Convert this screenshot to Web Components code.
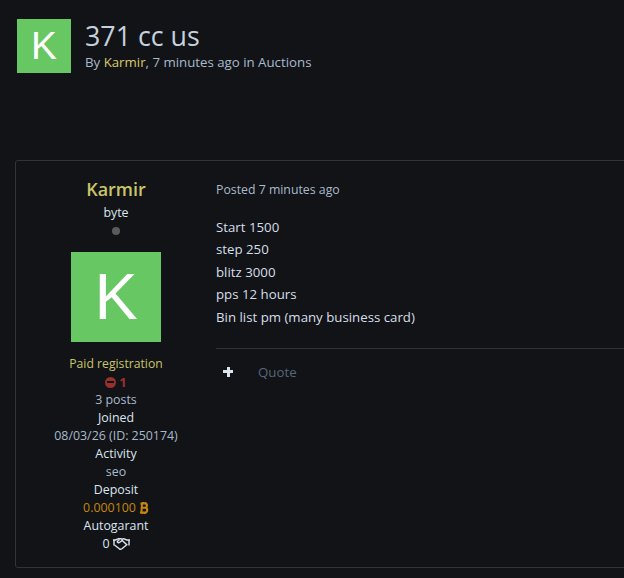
<!DOCTYPE html>
<html>
<head>
<meta charset="utf-8">
<style>
  html, body { margin: 0; background: #121317; overflow: hidden; }
  body { width: 624px; height: 578px; font: 13.250px/18px "Open Sans", sans-serif; color: #c5d1de; }
</style>
</head>
<body>
<topic-page></topic-page>
<script>
/********************************* LetterAvatar ******************************************/
let avatarTmpl = document.createElement('template');
avatarTmpl.innerHTML = `
  <style>
    :host {
      display: flex;
      align-items: center;
      justify-content: center;
      background: #67c763;
      color: #fff;
      width: var(--size);
      height: var(--size);
      font-family: "Liberation Sans", sans-serif;
      font-size: calc(var(--size) * 0.72);
      line-height: 1;
      flex: none;
    }
  </style>
  <slot></slot>`;
class LetterAvatar extends HTMLElement {
  constructor() {
    super();
    this.attachShadow({ mode: 'open' });
    this.shadowRoot.appendChild(avatarTmpl.content.cloneNode(true));
  }
}
customElements.define('letter-avatar', LetterAvatar);

/********************************* TopicHeader ******************************************/
let headerTmpl = document.createElement('template');
headerTmpl.innerHTML = `
  <style>
    :host { display: flex; gap: 14px; padding: 19px 0 0 17px; height: 160px; box-sizing: border-box; }
    letter-avatar { --size: 54px; }
    h1 { margin: 0; font-size: 26.800px; line-height: 34px; font-weight: 400; color: #c5d1de; }
    p { margin: 0; font-size: 13.250px; line-height: 18px; color: #a9bacb; }
    b { font-weight: 400; color: #d8c96b; }
  </style>
  <letter-avatar>K</letter-avatar>
  <div>
    <h1>371 cc us</h1>
    <p>By <b>Karmir</b>, 7 minutes ago in Auctions</p>
  </div>`;
class TopicHeader extends HTMLElement {
  constructor() {
    super();
    this.attachShadow({ mode: 'open' });
    this.shadowRoot.appendChild(headerTmpl.content.cloneNode(true));
  }
}
customElements.define('topic-header', TopicHeader);

/********************************* PostAuthor ******************************************/
let authorTmpl = document.createElement('template');
authorTmpl.innerHTML = `
  <style>
    :host { display: flex; flex-direction: column; align-items: center; width: 200px; flex: none; text-align: center; font-size: 12.400px; line-height: 18px; padding-top: 16px; box-sizing: border-box; }
    .name { font-size: 18px; line-height: 24px; font-weight: 600; color: #c9c56b; }
    .rank { line-height: 20px; color: #dbe5ef; padding-top: 2px; }
    .dot { width: 8px; height: 8px; border-radius: 50%; background: #5b5b5b; margin: 4px 0 17px; }
    letter-avatar { --size: 90px; margin-bottom: 13px; }
    .group { color: #c9c56b; font-size: 12.200px; }
    .warn { display: flex; align-items: center; gap: 3px; color: #98302f; font-weight: 700; font-size: 13px; }
    .warn span { display: block; width: 11px; height: 11px; border-radius: 50%; background: #98302f; position: relative; }
    .warn span::after { content: ''; position: absolute; left: 2px; right: 2px; top: 4.500px; height: 2px; background: #121317; }
    .muted { color: #a9bacb; }
    .label { color: #dbe5ef; }
    .coin { color: #c5860f; display: flex; align-items: center; gap: 3px; }
    .zero { display: flex; align-items: center; gap: 3px; color: #dbe5ef; }
  </style>
  <div class="name">Karmir</div>
  <div class="rank">byte</div>
  <div class="dot"></div>
  <letter-avatar>K</letter-avatar>
  <div class="group">Paid registration</div>
  <div class="warn"><span></span>1</div>
  <div class="muted">3 posts</div>
  <div class="label">Joined</div>
  <div class="muted">08/03/26 (ID: 250174)</div>
  <div class="label">Activity</div>
  <div class="muted">seo</div>
  <div class="label">Deposit</div>
  <div class="coin">0.000100
    <svg width="10" height="12" viewBox="0 0 10 12" fill="none" stroke="#c5860f" stroke-width="2"><g transform="skewX(-3) translate(.5 0)"><path d="M1 1.500h4.500a2.100 2.100 0 0 1 0 4.300H2.500h3.300a2.200 2.200 0 0 1 0 4.700H1M2.500 1.500v9M3.500 0v1.500M6 0v1.500M3.500 10.500V12M6 10.500V12"/></g></svg>
  </div>
  <div class="label">Autogarant</div>
  <div class="zero">0
    <svg width="17" height="12" viewBox="0 0 17 12" fill="none" stroke="#dbe5ef" stroke-width="1.400"><path d="M0 2h2.500l3-1.300h2.300l1 .5 2-.5 2.800 1.300H17M1 1.500v6M16 1.500v6" /><path d="M1.500 7l4.800 3.800c.9.6 1.900.4 2.600-.1l4.900-3.900-4.600-4.300-2.700 2c-1 .7-2.200.1-2.200-1l2.200-2"/></svg>
  </div>`;
class PostAuthor extends HTMLElement {
  constructor() {
    super();
    this.attachShadow({ mode: 'open' });
    this.shadowRoot.appendChild(authorTmpl.content.cloneNode(true));
  }
}
customElements.define('post-author', PostAuthor);

/********************************* PostBody ******************************************/
let bodyTmpl = document.createElement('template');
bodyTmpl.innerHTML = `
  <style>
    :host { display: block; flex: 1; padding-top: 20px; font-size: 13.250px; min-width: 0; }
    .meta { color: #a9bacb; line-height: 18px; font-size: 12.300px; }
    .content { margin-top: 16.700px; line-height: 22.500px; color: #d5dfe9; height: 132.300px; border-bottom: 1px solid #333; }
    .actions { display: flex; align-items: center; padding-top: 14px; color: #56677a; }
    .plus { width: 10px; height: 10px; margin: 0 25px 0 7px; position: relative; }
    .plus::before, .plus::after { content: ''; position: absolute; background: #dbe5ef; }
    .plus::before { left: 0; right: 0; top: 3.500px; height: 3px; }
    .plus::after { top: 0; bottom: 0; left: 3.500px; width: 3px; }
  </style>
  <div class="meta">Posted 7 minutes ago</div>
  <div class="content"><slot></slot></div>
  <div class="actions"><span class="plus"></span>Quote</div>`;
class PostBody extends HTMLElement {
  constructor() {
    super();
    this.attachShadow({ mode: 'open' });
    this.shadowRoot.appendChild(bodyTmpl.content.cloneNode(true));
  }
}
customElements.define('post-body', PostBody);

/********************************* TopicPage ******************************************/
let pageTmpl = document.createElement('template');
pageTmpl.innerHTML = `
  <style>
    :host { display: block; }
    .card { display: flex; margin-left: 15px; width: 640px; height: 408px; box-sizing: border-box; border: 1px solid #333438; border-radius: 3px; }
  </style>
  <topic-header></topic-header>
  <div class="card">
    <post-author></post-author>
    <post-body>Start 1500<br>step 250<br>blitz 3000<br>pps 12 hours<br>Bin list pm (many business card)</post-body>
  </div>`;
class TopicPage extends HTMLElement {
  constructor() {
    super();
    this.attachShadow({ mode: 'open' });
    this.shadowRoot.appendChild(pageTmpl.content.cloneNode(true));
  }
}
customElements.define('topic-page', TopicPage);
</script>
</body>
</html>
